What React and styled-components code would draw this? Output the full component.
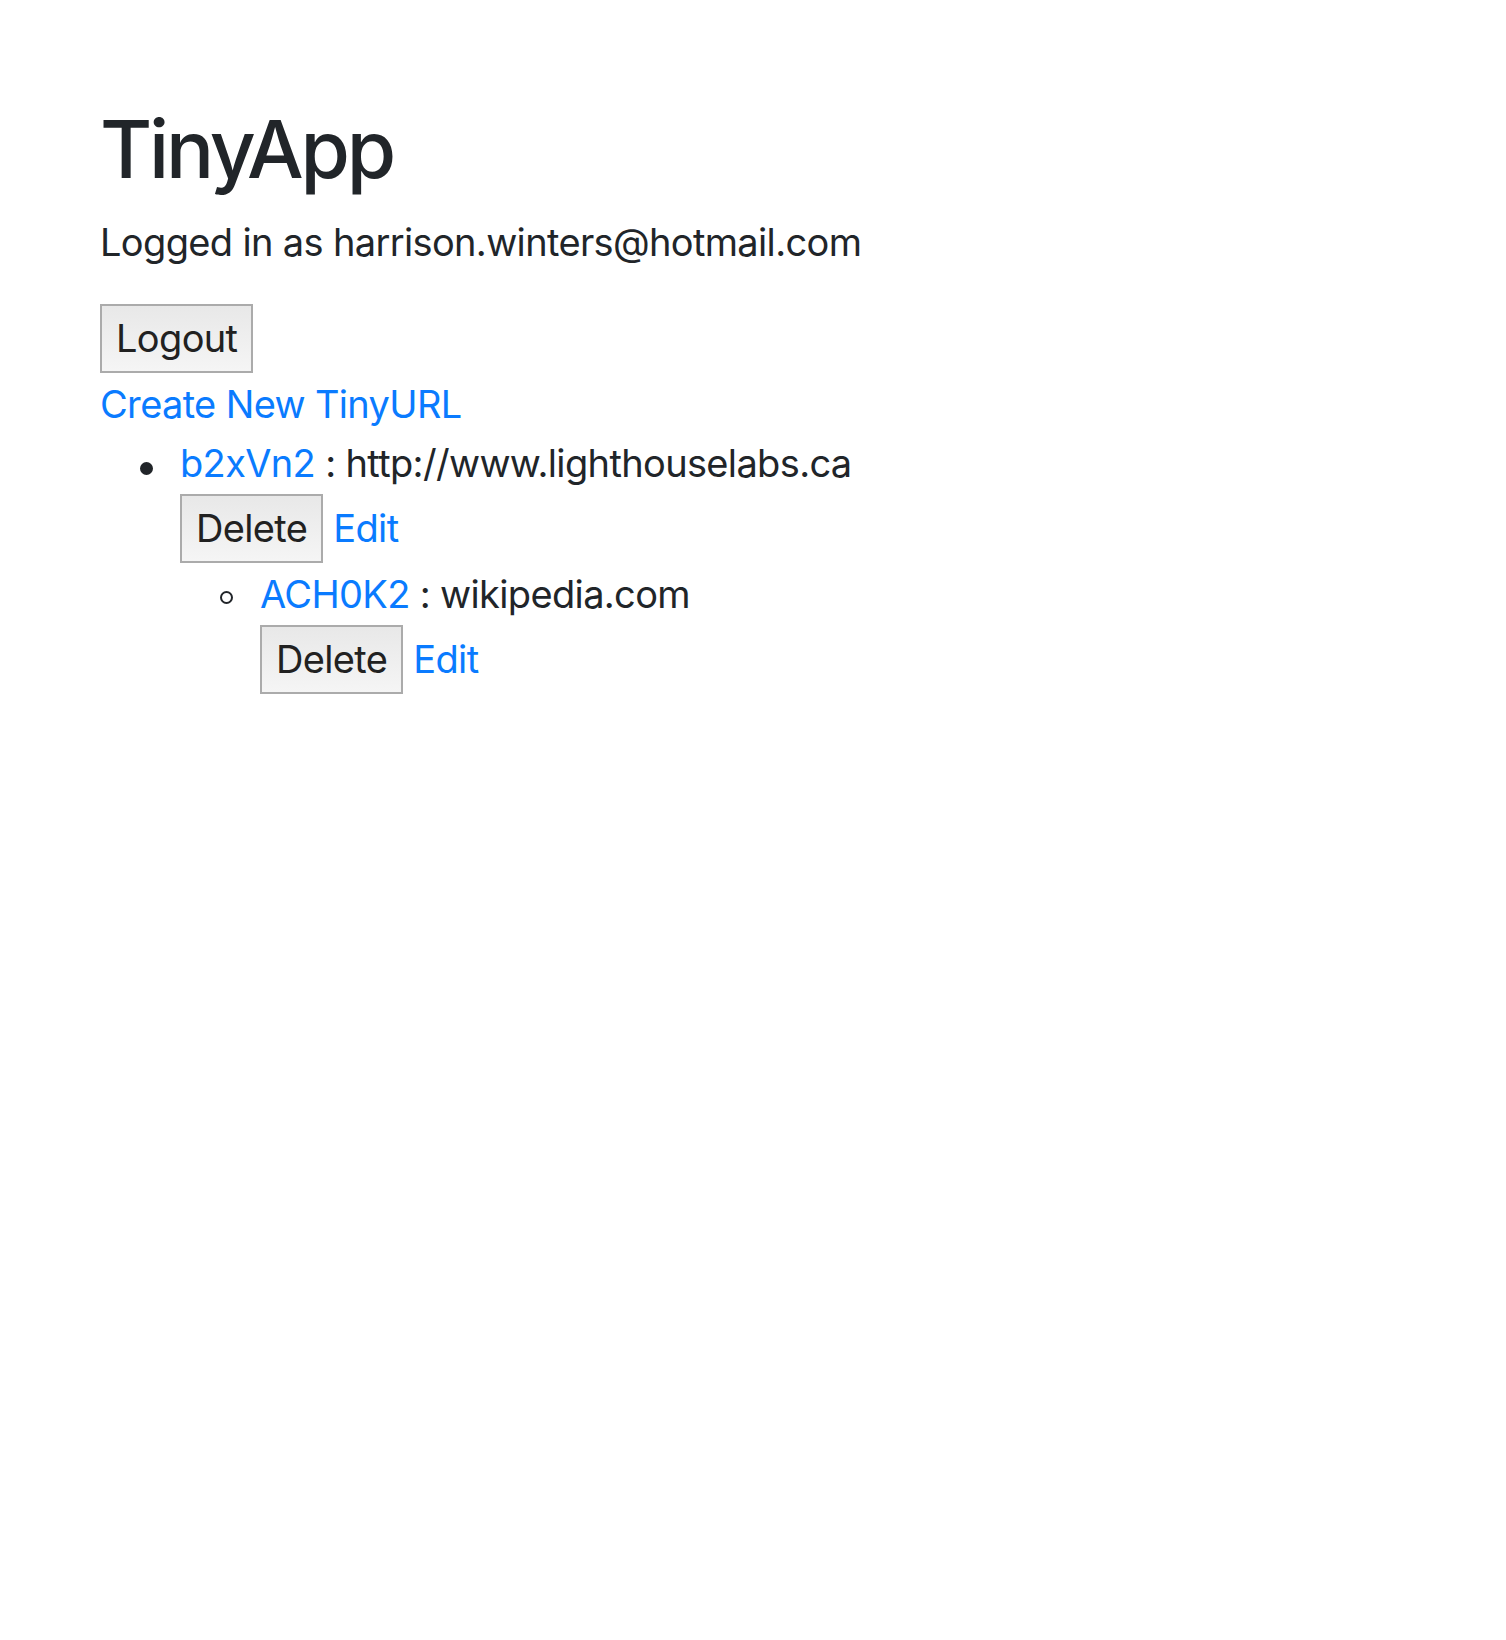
import React from "react"
import styled, { createGlobalStyle } from "styled-components"

const GlobalStyle = createGlobalStyle`
  html, body {
    margin: 0;
    padding: 0;
    background: #fff;
  }
  body {
    font-family: Inter, "Liberation Sans", sans-serif;
    color: #212529;
  }
`

const Page = styled.main`
  padding: 101px 100px 0;
  font-size: 38px;
  line-height: 57px;
  letter-spacing: -0.65px;
`

const Title = styled.h1`
  margin: 0 0 17px;
  font-size: 80px;
  line-height: 96px;
  font-weight: 500;
  letter-spacing: -3.2px;
`

const Status = styled.p`
  margin: 0 0 33px;
`

const Form = styled.form`
  margin: 0 0 3px;
`

const Button = styled.button`
  font: inherit;
  letter-spacing: inherit;
  line-height: 57px;
  color: #212121;
  padding: 4px 14px;
  border: 2px solid #ababab;
  border-radius: 0;
  background: linear-gradient(#e8e8e8, #f5f5f5);
  cursor: pointer;
`

const Link = styled.a`
  color: #0a7bff;
  text-decoration: none;
  display: ${p => (p.$block ? "block" : "inline")};
`

const List = styled.ul`
  margin: ${p => (p.$nested ? "0" : "2px 0 0")};
  padding-left: 80px;
  list-style: none;
`

const Item = styled.li`
  position: relative;

  &::before {
    content: "";
    position: absolute;
    box-sizing: border-box;
    left: -40px;
    top: ${p => (p.$hollow ? "25px" : "27px")};
    width: 13px;
    height: 13px;
    border-radius: 50%;
    border: 2px solid #212529;
    background: ${p => (p.$hollow ? "transparent" : "#212529")};
  }
`

const Actions = styled.div`
  display: flex;
  align-items: baseline;
  gap: 10px;
  margin: 2px 0 3px;
`

const urls = [
  { id: "b2xVn2", long: "http://www.lighthouselabs.ca" },
  { id: "ACH0K2", long: "wikipedia.com" },
]

const UrlList = ({ items, depth = 0 }) => {
  if (!items.length) return null
  const [first, ...rest] = items
  const nested = depth > 0
  return (
    <List $nested={nested}>
      <Item $hollow={nested}>
        <Link href="#">{first.id}</Link> : {first.long}
        <Actions>
          <form onSubmit={e => e.preventDefault()}>
            <Button type="submit">Delete</Button>
          </form>
          <Link href="#">Edit</Link>
        </Actions>
        <UrlList items={rest} depth={depth + 1} />
      </Item>
    </List>
  )
}

export default function App() {
  return (
    <>
      <GlobalStyle />
      <Page>
        <Title>TinyApp</Title>
        <Status>Logged in as harrison.winters@hotmail.com</Status>
        <Form onSubmit={e => e.preventDefault()}>
          <Button type="submit">Logout</Button>
        </Form>
        <Link href="#" $block>Create New TinyURL</Link>
        <UrlList items={urls} />
      </Page>
    </>
  )
}
